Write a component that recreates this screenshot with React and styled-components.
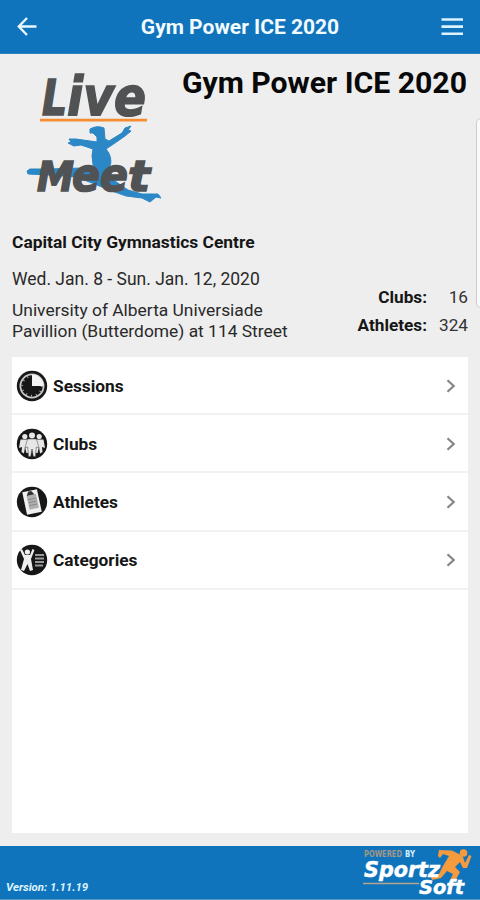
import React from 'react';
import styled, {createGlobalStyle} from 'styled-components';

const menuItems = [
	{label: 'Sessions', icon: 'clock'},
	{label: 'Clubs', icon: 'group'},
	{label: 'Athletes', icon: 'clipboard'},
	{label: 'Categories', icon: 'category'},
];

const BackIcon = () => (
	<svg width='20' height='20' viewBox='0 0 20 20' fill='none' stroke='#e9f7ff' strokeWidth='2.4'>
		<path d='M19.5 9.5H2.5M10 1L1.8 9.5L10 18' />
	</svg>
);

const MenuIcon = () => (
	<svg width='22' height='18' viewBox='0 0 22 18' fill='#dcf3ff'>
		<path d='M0.5 0.2h21.5v2.6H0.5zM0.5 7.3h21.5v2.6H0.5zM0.5 14.4h21.5v2.6H0.5z' />
	</svg>
);

const ChevronIcon = () => (
	<svg width='10' height='14' viewBox='0 0 10 14' fill='none' stroke='#858585' strokeWidth='2.2'>
		<path d='M1.5 1.2L7.7 7L1.5 12.8' />
	</svg>
);

const LiveMeetLogo = () => (
	<StyledLogo width='136' height='130' viewBox='0 0 136 130'>
		<g fill='#2b87c5' stroke='#2b87c5' strokeWidth='1' strokeLinejoin='round'>
			<path d='M64 56Q71 52 78 55L79 66L83 68L96 60L99 55L105 53L102 57L105 58L99 63L89 70L80 76Q87 84 84 94L86 109L66 108Q69 99 67 91Q65 82 67 76L55 72L48 73L42 70L45 69L43 66L50 66L57 67L71 69V64L67 60L64 60Z' />
			<path d='M1 98L4 96L22 96L56 95L86 106L102 117L116 121L132 121L135 125L130 124L124 129L116 125L100 123L86 118L66 110L50 104L24 102L2 101Z' />
		</g>
		<g fill='#515253' stroke='#515253' strokeWidth='1.6' fontFamily='"DejaVu Sans", sans-serif' fontWeight='700' fontStyle='italic'>
			<text x='16' y='41.5' fontSize='49' textLength='25' lengthAdjust='spacingAndGlyphs'>L</text>
			<text x='41' y='41.5' fontSize='54' textLength='79' lengthAdjust='spacingAndGlyphs'>ive</text>
			<text x='11' y='117.5' fontSize='41' textLength='37' lengthAdjust='spacingAndGlyphs'>M</text>
			<text x='46' y='117.5' fontSize='47' textLength='56' lengthAdjust='spacingAndGlyphs'>ee</text>
			<text x='102' y='117.5' fontSize='43' textLength='22' lengthAdjust='spacingAndGlyphs'>t</text>
		</g>
		<path d='M14 47.2h107' stroke='#f58c32' strokeWidth='2.8' />
	</StyledLogo>
);

const SportzSoftLogo = () => (
	<StyledLogo width='112' height='50' viewBox='0 0 112 50'>
		<g fill='#f59a3d'>
			<circle cx='101.5' cy='6' r='3.8' />
			<path d='M77 3L90 3.5L97 7L101 10L103 16L107 8L109.5 9L105 21L101 21L98 15L93 20L98 25L93 34L88 33L91 27L85 24L79 31L70 33L69 30L77 27L81 19L87 9L81 7L78 11L76 9Z' />
		</g>
		<path d='M1 36.5h56' stroke='#b3a48b' strokeWidth='1.6' />
		<g fontFamily='"DejaVu Sans", sans-serif' fontWeight='700' fontStyle='italic'>
			<text x='2' y='10' fontSize='8' fontStyle='normal' fill='#a39785' textLength='38' lengthAdjust='spacingAndGlyphs'>POWERED</text>
			<text x='43' y='10' fontSize='8' fontStyle='normal' fill='#d6efff' textLength='10' lengthAdjust='spacingAndGlyphs'>BY</text>
			<text x='2' y='30' fontSize='22' fill='#fff' stroke='#fff' strokeWidth='.5' textLength='76' lengthAdjust='spacingAndGlyphs'>Sportz</text>
			<text x='57' y='46.5' fontSize='20' fill='#fff' stroke='#fff' strokeWidth='.5' textLength='45' lengthAdjust='spacingAndGlyphs'>Soft</text>
		</g>
	</StyledLogo>
);

const RowIcon = ({type}) => (
	<svg width='32' height='32' viewBox='0 0 32 32'>
		<circle cx='16' cy='16' r='15.2' fill='#171717' />
		{type === 'clock' && (
			<>
				<circle cx='16' cy='16' r='11.6' fill='#171717' stroke='#c8c8c8' strokeWidth='1.8' />
				<circle cx='16' cy='16' r='9.8' fill='none' stroke='#aaa' strokeWidth='2' strokeDasharray='1 4.13' />
				<path d='M16 4.5A11.5 11.5 0 0 1 27.5 16H16z' fill='#f3f3f3' />
			</>
		)}
		{type === 'group' && (
			<g fill='#e6e6e6'>
				<circle cx='8.8' cy='8.5' r='2.6' />
				<circle cx='23.2' cy='8.5' r='2.6' />
				<path d='M4.5 11.5H12V25h-1.6L9 19l-1 6.5-2.5-1.5.5-5-3 1zM20 11.5h7.5l1.5 8.5-3-1 .5 5-2.5 1.5-1-6.5-1.4 6H20z' />
				<path d='M11.5 11h9l2.5 9-2.7-1-.8 9.5h-2.2L16 21l-1.3 7.5h-2.2L11.7 19 9 20z' stroke='#444' strokeWidth='.5' />
				<circle cx='16' cy='7.4' r='3' />
			</g>
		)}
		{type === 'clipboard' && (
			<g transform='rotate(-12 16 16)'>
				<path d='M8.5 4.5h15v23h-15z' fill='#f0f0f0' />
				<path d='M12 9h9.5v14H12z' fill='#b0b0b0' />
				<path d='M12.5 13h8M12.5 16h8M12.5 19h8' stroke='#888' />
				<path d='M12 9l2.5-4h3l2.5 4z' fill='#333' />
			</g>
		)}
		{type === 'category' && (
			<>
				<path d='M4 6l2-1 3 6h5l2.5-6 2 1-3.5 9 2 11-3 1-2.5-7L8 27l-3-1 3-11z' fill='#eee' />
				<circle cx='11.4' cy='8' r='2.6' fill='#eee' />
				<path d='M19 11h9M19 14.5h9M19 18h9M19 21.5h8' stroke='#999' strokeWidth='2' />
			</>
		)}
	</svg>
);

const App = () => (
	<>
		<GlobalStyle />
		<StyledScreen>
			<StyledHeader>
				<StyledIconButton aria-label='Back'><BackIcon /></StyledIconButton>
				<StyledHeading>Gym Power ICE 2020</StyledHeading>
				<StyledIconButton aria-label='Menu'><MenuIcon /></StyledIconButton>
			</StyledHeader>
			<StyledMain>
				<StyledScrollEdge />
				<StyledHero>
					<LiveMeetLogo />
					<StyledTitle>Gym Power ICE 2020</StyledTitle>
				</StyledHero>
				<StyledDetails>
					<div>
						<StyledHost>Capital City Gymnastics Centre</StyledHost>
						<StyledDate>Wed. Jan. 8 - Sun. Jan. 12, 2020</StyledDate>
						<StyledVenue>University of Alberta Universiade</StyledVenue>
						<StyledVenue>Pavillion (Butterdome) at 114 Street</StyledVenue>
					</div>
					<StyledCounts>
						<dt>Clubs:</dt>
						<dd>16</dd>
						<dt>Athletes:</dt>
						<dd>324</dd>
					</StyledCounts>
				</StyledDetails>
				<StyledList>
					{menuItems.map(item => (
						<StyledRow key={item.label}>
							<RowIcon type={item.icon} />
							<StyledRowLabel>{item.label}</StyledRowLabel>
							<ChevronIcon />
						</StyledRow>
					))}
				</StyledList>
			</StyledMain>
			<StyledFooter>
				<StyledVersion>Version: 1.11.19</StyledVersion>
				<SportzSoftLogo />
			</StyledFooter>
		</StyledScreen>
	</>
);

const GlobalStyle = createGlobalStyle`
	* {
		box-sizing: border-box;
	}
	body {
		margin: 0;
		font-family: Roboto, sans-serif;
	}
`;
const StyledScreen = styled.div`
	display: flex;
	flex-direction: column;
	width: 480px;
	height: 900px;
	background-color: #eee;
	color: #161616;
	overflow: hidden;
`;
const StyledHeader = styled.header`
	display: flex;
	flex: none;
	align-items: center;
	justify-content: space-between;
	height: 54px;
	padding: 0 17px;
	background-color: #1074bc;
	border-bottom: 1px solid #2f83bd;
`;
const StyledIconButton = styled.button`
	display: flex;
	padding: 0;
	border: 0;
	background: none;
`;
const StyledHeading = styled.div`
	margin-left: 2px;
	color: #f2fbff;
	font-size: 21px;
	font-weight: 700;
	white-space: nowrap;
`;
const StyledLogo = styled.svg`
	flex: none;
	overflow: visible;
`;
const StyledMain = styled.main`
	display: flex;
	flex: 1;
	flex-direction: column;
	position: relative;
	padding: 0 12px 13px;
`;
const StyledScrollEdge = styled.div`
	position: absolute;
	top: 64px;
	right: -5px;
	width: 9px;
	height: 190px;
	border: 1px solid #ccc;
	border-radius: 5px;
	background-color: #fafafa;
`;
const StyledHero = styled.section`
	display: flex;
	justify-content: space-between;
	height: 170px;
	padding: 19px 1px 0 14px;
`;
const StyledTitle = styled.h1`
	margin: -8px 0 0;
	font-size: 30.2px;
	font-weight: 700;
	line-height: 36px;
	color: #080808;
	white-space: nowrap;
`;
const StyledDetails = styled.section`
	display: flex;
	justify-content: space-between;
	height: 133px;
`;
const StyledHost = styled.div`
	margin-top: 8px;
	font-size: 17.4px;
	font-weight: 700;
	line-height: 20px;
	white-space: nowrap;
`;
const StyledDate = styled.div`
	margin: 17px 0 11px;
	font-size: 17.5px;
	line-height: 20px;
	color: #292929;
	white-space: nowrap;
`;
const StyledVenue = styled.div`
	font-size: 17.4px;
	line-height: 21px;
	color: #292929;
	white-space: nowrap;
`;
const StyledCounts = styled.dl`
	display: grid;
	grid-template-columns: auto auto;
	column-gap: 12px;
	align-content: start;
	margin: 59px 0 0;
	font-size: 17.2px;
	line-height: 28px;
	text-align: right;
	dt {
		font-weight: 700;
	}
	dd {
		margin: 0;
		color: #333;
	}
`;
const StyledList = styled.nav`
	flex: 1;
	background-color: #fff;
`;
const StyledRow = styled.div`
	display: flex;
	align-items: center;
	height: 58.2px;
	padding: 1px 12px 0 4px;
	border-bottom: 2px solid #f1f1f1;
`;
const StyledRowLabel = styled.span`
	flex: 1;
	margin-left: 5px;
	font-size: 17.3px;
	font-weight: 700;
`;
const StyledFooter = styled.footer`
	display: flex;
	flex: none;
	align-items: flex-end;
	justify-content: space-between;
	height: 54px;
	padding: 0 6px 2px;
	background-color: #1074bc;
	border-bottom: 1px solid #5599c7;
`;
const StyledVersion = styled.span`
	margin-bottom: 3px;
	color: #ddf4ff;
	font-size: 11.4px;
	font-weight: 700;
	font-style: italic;
`;

export default App;
